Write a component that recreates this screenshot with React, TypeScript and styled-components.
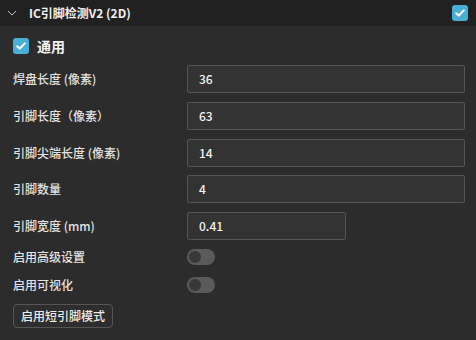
import styled, { createGlobalStyle } from "styled-components";

const GlobalStyle = createGlobalStyle`
    html, body {
        margin: 0;
        padding: 0;
        background: #2c2c2c;
    }
    body {
        font-family: "Noto Sans CJK SC", "Noto Sans", sans-serif;
    }
`;

const Panel = styled.div`
    width: 476px;
    height: 340px;
    background: #2c2c2c;
    color: #e6e6e6;
    overflow: hidden;
`;

const Header = styled.div`
    height: 26px;
    display: flex;
    align-items: center;
    padding: 0 8px 0 7px;
    background: #212121;
`;

const Chevron = styled.svg`
    width: 10px;
    height: 10px;
    flex-shrink: 0;
`;

const Title = styled.span`
    margin-left: 12px;
    flex: 1;
    font-size: 12px;
    line-height: 16px;
    font-weight: 700;
    color: #f0f0f0;
`;

const CheckBox = styled.span<{ $size: number }>`
    width: ${({ $size }) => $size}px;
    height: ${({ $size }) => $size}px;
    border-radius: 3px;
    background: #4aafd5;
    display: flex;
    align-items: center;
    justify-content: center;
    flex-shrink: 0;
`;

const Body = styled.div`
    padding: 12px 11px 0 13px;
`;

const Section = styled.div`
    display: flex;
    align-items: center;
    gap: 8px;
    height: 16px;
    margin-bottom: 11px;
`;

const SectionTitle = styled.span`
    font-size: 14px;
    line-height: 16px;
    font-weight: 700;
    color: #f2f2f2;
`;

const Form = styled.div`
    display: grid;
    grid-template-columns: 174px 1fr;
    grid-auto-rows: 28px;
    row-gap: 8.75px;
    align-items: center;
`;

const ToggleForm = styled(Form)`
    grid-auto-rows: 20px;
    row-gap: 8px;
    margin-top: 7px;
`;

const Label = styled.span`
    font-size: 12px;
    line-height: 16px;
    font-weight: 500;
    color: #e2e2e2;
`;

const Input = styled.div<{ $width?: number }>`
    box-sizing: border-box;
    height: 28px;
    width: ${({ $width }) => ($width ? `${$width}px` : "100%")};
    border: 1px solid #555555;
    border-radius: 2px;
    background: #333333;
    display: flex;
    align-items: center;
    padding-left: 11px;
    font-size: 12px;
    line-height: 16px;
    font-weight: 500;
    color: #f4f4f4;
`;

const Toggle = styled.span`
    width: 28px;
    height: 16px;
    border-radius: 8px;
    background: #5a5a5a;
    display: flex;
    align-items: center;
    padding-left: 2px;
    box-sizing: border-box;

    &::after {
        content: "";
        width: 12px;
        height: 12px;
        border-radius: 50%;
        background: #383838;
    }
`;

const Button = styled.button`
    display: block;
    margin-top: 9px;
    box-sizing: border-box;
    width: 100px;
    height: 24px;
    border: 1px solid #555555;
    border-radius: 4px;
    background: #2e2e2e;
    color: #ececec;
    font-family: inherit;
    font-size: 12px;
    line-height: 16px;
    font-weight: 500;
    padding: 0;
`;

const Check = () => (
    <svg width="10" height="8" viewBox="0 0 10 8">
        <path d="M1.2 4.2 L3.8 6.6 L8.8 1.4" fill="none" stroke="#ffffff" strokeWidth="2" strokeLinecap="round" strokeLinejoin="round" />
    </svg>
);

const fields = [
    { label: "焊盘长度 (像素)", value: "36" },
    { label: "引脚长度（像素）", value: "63" },
    { label: "引脚尖端长度 (像素)", value: "14" },
    { label: "引脚数量", value: "4" },
    { label: "引脚宽度 (mm)", value: "0.41", width: 159 },
];

const toggles = ["启用高级设置", "启用可视化"];

export default function App() {
    return (
        <Panel>
            <GlobalStyle />
            <Header>
                <Chevron viewBox="0 0 10 10">
                    <path d="M1 3 L5 7 L9 3" fill="none" stroke="#bdbdbd" strokeWidth="1" />
                </Chevron>
                <Title>IC引脚检测V2 (2D)</Title>
                <CheckBox $size={16}>
                    <Check />
                </CheckBox>
            </Header>
            <Body>
                <Section>
                    <CheckBox $size={16}>
                        <Check />
                    </CheckBox>
                    <SectionTitle>通用</SectionTitle>
                </Section>
                <Form>
                    {fields.flatMap((f) => [
                        <Label key={f.label}>{f.label}</Label>,
                        <Input key={f.label + "-v"} $width={f.width}>
                            {f.value}
                        </Input>,
                    ])}
                </Form>
                <ToggleForm>
                    {toggles.flatMap((t) => [
                        <Label key={t}>{t}</Label>,
                        <Toggle key={t + "-t"} />,
                    ])}
                </ToggleForm>
                <Button>启用短引脚模式</Button>
            </Body>
        </Panel>
    );
}
